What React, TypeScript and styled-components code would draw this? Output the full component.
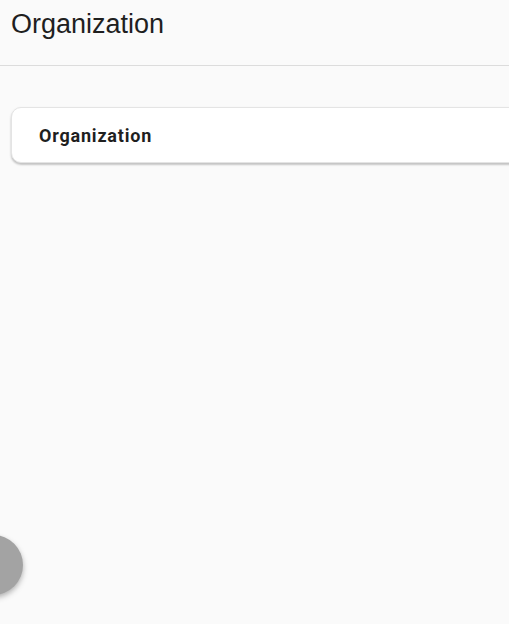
import React from "react";
import styled, { createGlobalStyle } from "styled-components";

const Global = createGlobalStyle`
  html, body { margin: 0; padding: 0; background: #fafafa; overflow: hidden; }
  body { width: 509px; height: 624px; font-family: "Liberation Sans", Arial, sans-serif; }
`;

const Page = styled.div`
  position: relative;
  width: 509px;
  height: 624px;
  overflow: hidden;
  background: #fafafa;
`;

const Header = styled.header`
  height: 66px;
  box-sizing: border-box;
  border-bottom: 1px solid #dcdcdc;
  padding: 8px 11px 0;
`;

const Title = styled.h1`
  margin: 0;
  font-family: "Liberation Sans", Arial, sans-serif;
  font-weight: 400;
  font-size: 27px;
  line-height: 32px;
  color: #1f1f1f;
`;

const Content = styled.main`
  padding: 41px 0 0 11px;
`;

const Card = styled.section`
  width: 620px;
  height: 56px;
  box-sizing: border-box;
  background: #fff;
  border-radius: 10px;
  border: 1px solid #e4e4e4;
  box-shadow: 0 2px 2px rgba(0, 0, 0, 0.18), 0 1px 3px rgba(0, 0, 0, 0.08);
  display: flex;
  align-items: center;
  padding-left: 27px;
`;

const CardTitle = styled.h2`
  margin: 0;
  font-family: Roboto, "Noto Sans", sans-serif;
  font-weight: 700;
  font-size: 18px;
  letter-spacing: 0.8px;
  color: #1f1f1f;
`;

const Fab = styled.button`
  position: absolute;
  left: -37px;
  top: 535px;
  width: 60px;
  height: 60px;
  border-radius: 50%;
  border: none;
  background: #a3a3a3;
  box-shadow: 0 3px 6px rgba(0, 0, 0, 0.2), 0 2px 4px rgba(0, 0, 0, 0.12);
  padding: 0;
`;

export default function App() {
  return (
    <Page>
      <Global />
      <Header>
        <Title>Organization</Title>
      </Header>
      <Content>
        <Card>
          <CardTitle>Organization</CardTitle>
        </Card>
      </Content>
      <Fab aria-label="menu" />
    </Page>
  );
}
